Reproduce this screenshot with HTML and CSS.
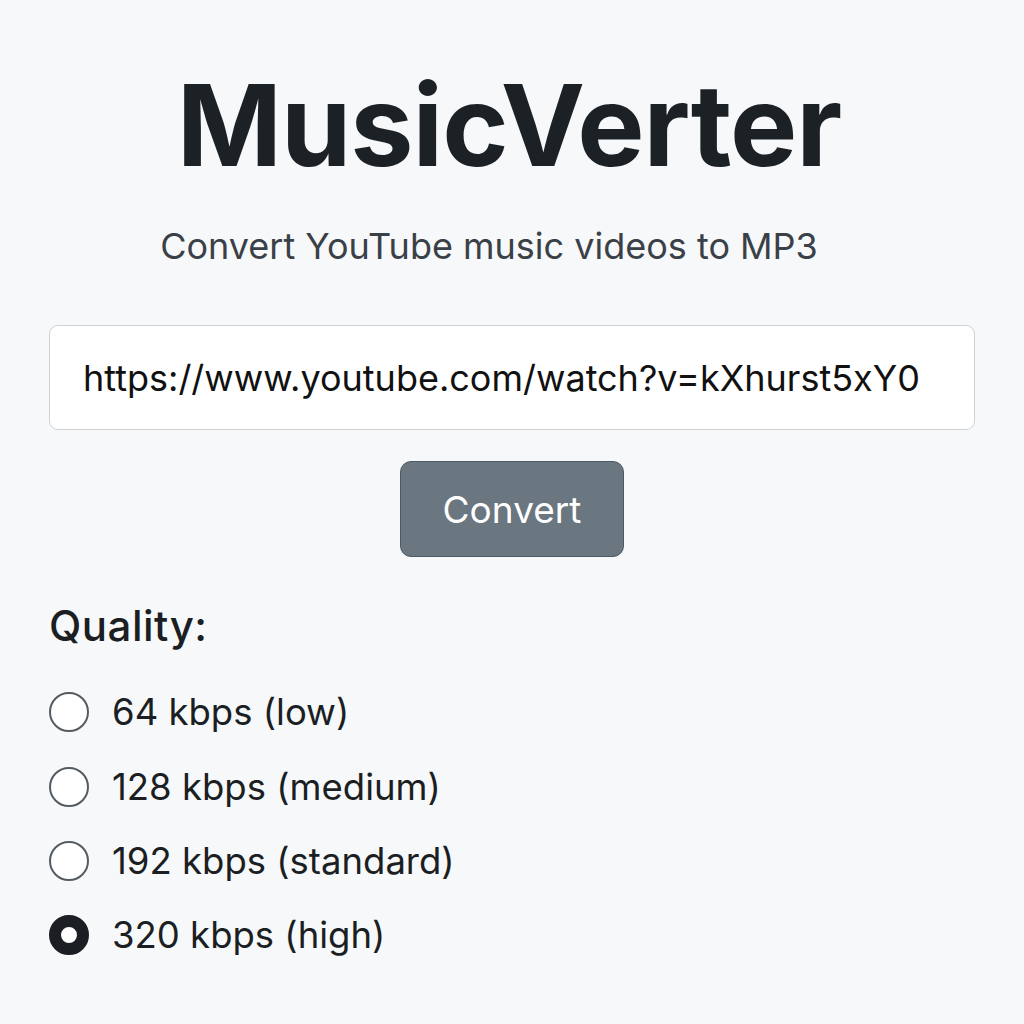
FILE: index.html
```html
<!DOCTYPE html>
<html lang="en">

<head>
    <meta charset="UTF-8">
    <meta name="viewport" content="width=device-width, initial-scale=1.0">
    <title>MusicVerter</title>
    <link rel="stylesheet" href="styles.css">
</head>

<body>
    <div class="container">
        <h1>MusicVerter</h1>
        <p class="subtitle">Convert YouTube music videos to MP3</p>

        <!-- Link form -->
        <form id="convertForm" class="convert-form">
            <input type="text" id="videoUrl" class="url-input" value="https://www.youtube.com/watch?v=kXhurst5xY0">
            <button type="submit" class="convert-button">Convert</button>
        </form>

        <!-- Quality options -->
        <div class="quality">
            <h2>Quality:</h2>
            <label class="option"><input type="radio" name="quality" value="64"> 64 kbps (low)</label>
            <label class="option"><input type="radio" name="quality" value="128"> 128 kbps (medium)</label>
            <label class="option"><input type="radio" name="quality" value="192"> 192 kbps (standard)</label>
            <label class="option"><input type="radio" name="quality" value="320" checked> 320 kbps (high)</label>
        </div>
    </div>
</body>

</html>
```

FILE: styles.css
```css
body {
    font-family: Inter, "Noto Sans", sans-serif;
    background-color: #f7f8f9;
    color: #1b1f23;
    margin: 0;
    padding: 0;
}

.container {
    padding: 0 49px;
}

h1 {
    font-size: 113px;
    font-weight: 700;
    line-height: 1;
    letter-spacing: -1px;
    text-align: center;
    margin: 69px 0 0;
    padding-right: 6px;
    color: #1c2126;
}

.subtitle {
    font-size: 36px;
    line-height: 1;
    text-align: center;
    color: #3a4047;
    margin: 46px 0 0;
    padding-right: 46px;
}

.convert-form {
    display: flex;
    flex-direction: column;
    align-items: center;
    gap: 31px;
    margin-top: 61px;
}

.url-input {
    width: 100%;
    height: 105px;
    box-sizing: border-box;
    padding: 0 33px;
    font-family: inherit;
    font-size: 36px;
    color: #111;
    background: #fff;
    border: 1.5px solid #cfd2d5;
    border-radius: 9px;
}

.convert-button {
    width: 224px;
    height: 96px;
    font-family: inherit;
    font-size: 37px;
    color: #fff;
    background-color: #6a7680;
    border: 1px solid #4d5963;
    border-radius: 11px;
    cursor: pointer;
}

.quality h2 {
    font-size: 42px;
    font-weight: 500;
    letter-spacing: 0.5px;
    line-height: 1;
    margin: 48px 0 28px;
}

.option {
    display: flex;
    align-items: center;
    gap: 23px;
    height: 74.4px;
    font-size: 36.5px;
}

.option input {
    appearance: none;
    width: 40px;
    height: 40px;
    margin: 0;
    box-sizing: border-box;
    border: 2px solid #555b60;
    border-radius: 50%;
    background: #fff;
}

.option input:checked {
    border: 12px solid #1b1f23;
}
```
